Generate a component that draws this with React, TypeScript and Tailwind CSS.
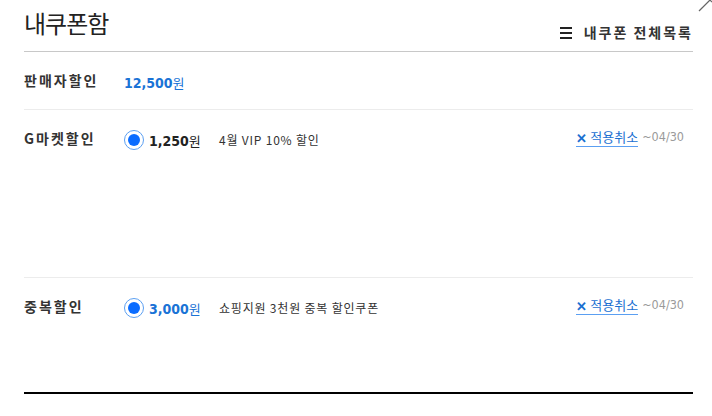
import React from "react";

const font = { fontFamily: '"Noto Sans CJK KR", "Noto Sans", sans-serif' };
const numFont = { fontFamily: '"DejaVu Sans Condensed", "DejaVu Sans", sans-serif' };

const Radio = () => (
  <span className="flex h-[20px] w-[20px] items-center justify-center rounded-full border border-[#5b9ff2] bg-white">
    <span className="h-[12px] w-[12px] rounded-full bg-[#0a6cff]" />
  </span>
);

const CancelLink = () => (
  <div className="mr-[9px] flex items-center gap-[4px]">
    <a className="flex items-center gap-[3px] border-b border-[#5b9ff2] pb-[1px] text-[13px] leading-[16px] text-[#1a6fd1]">
      <span className="text-[13px] font-bold leading-none">✕</span>
      <span>적용취소</span>
    </a>
    <span className="pb-[2px] text-[12.5px] text-[#9a9a9a]" style={numFont}>
      ~04/30
    </span>
  </div>
);

const CouponRow = ({
  label,
  amount,
  amountBlue,
  desc,
  height,
  last,
}: {
  label: string;
  amount: string;
  amountBlue?: boolean;
  desc: string;
  height: string;
  last?: boolean;
}) => (
  <div className={`flex items-start pt-[17px] ${height} ${last ? "" : "border-b border-[#ececec]"}`}>
    <div className="w-[100px] pt-[1px] text-[14px] font-bold tracking-[2px] text-[#333]">{label}</div>
    <div className="flex items-center">
      <Radio />
      <div className={`ml-[5px] w-[70px] ${amountBlue ? "text-[#1a73d6]" : "text-[#222]"}`}>
        <span className="text-[14px] font-bold" style={numFont}>
          {amount}
        </span>
        <span className="text-[13px]">원</span>
      </div>
      <div className="text-[12px] tracking-[0.8px] text-[#333]">{desc}</div>
    </div>
    <div className="ml-auto pt-[1px]">
      <CancelLink />
    </div>
  </div>
);

export default function App() {
  return (
    <div className="relative h-[416px] w-[712px] overflow-hidden bg-white" style={font}>
      <svg className="absolute right-[0px] top-[-2px]" width="14" height="14" viewBox="0 0 14 14">
        <path d="M1 13 L12 2" stroke="#666" strokeWidth="1.2" />
        <path d="M10 0 L14 4" stroke="#666" strokeWidth="1.2" />
      </svg>
      <div className="pl-[24px] pr-[19px]">
        <div className="flex h-[52px] items-end justify-between border-b border-[#c8c8c8] pb-[6px]">
          <h1 className="mb-[7px] text-[24px] font-normal leading-[30px] tracking-[-1px] text-[#222]">내쿠폰함</h1>
          <div className="flex items-center gap-[12px] pb-[2px]">
            <span className="flex w-[12px] flex-col gap-[3px]">
              <span className="h-[2px] bg-[#222]" />
              <span className="h-[2px] bg-[#222]" />
              <span className="h-[2px] bg-[#222]" />
            </span>
            <span className="text-[14px] font-bold tracking-[2px] text-[#333]">내쿠폰 전체목록</span>
          </div>
        </div>
        <div className="flex h-[58px] items-start border-b border-[#ececec] pt-[17px]">
          <div className="w-[100px] pt-[1px] text-[14px] font-bold tracking-[2px] text-[#333]">판매자할인</div>
          <div className="text-[#1a73d6]">
            <span className="text-[14px] font-bold" style={numFont}>
              12,500
            </span>
            <span className="text-[13px]">원</span>
          </div>
        </div>
        <CouponRow label="G마켓할인" amount="1,250" desc="4월 VIP 10% 할인" height="h-[168px]" />
        <CouponRow label="중복할인" amount="3,000" amountBlue desc="쇼핑지원 3천원 중복 할인쿠폰" height="h-[114px]" last />
        <div className="h-[2px] bg-black" />
      </div>
    </div>
  );
}
